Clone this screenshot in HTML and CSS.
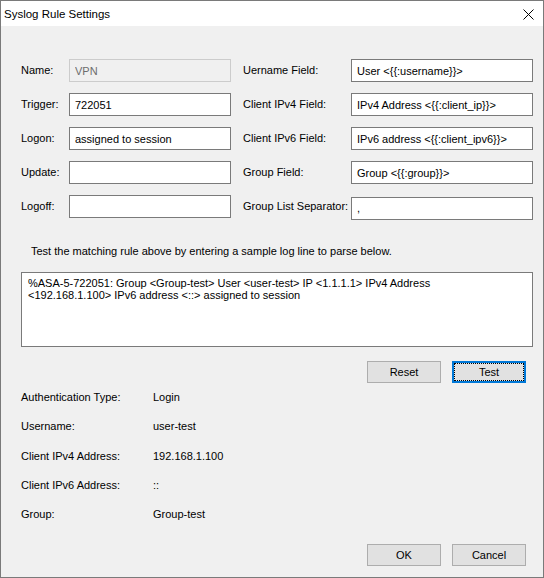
FILE: index.html
```html
<!DOCTYPE html>
<html lang="en">
<head>
  <meta charset="UTF-8">
  <meta name="viewport" content="width=device-width, initial-scale=1.0">
  <title>Syslog Rule Settings</title>
  <link rel="stylesheet" href="styles.css">
</head>
<body>

  <div class="window">
    <!-- Title bar -->
    <div class="titlebar">
      <span class="title">Syslog Rule Settings</span>
      <svg class="close" width="11" height="11" viewBox="0 0 11 11">
        <path d="M0.5 0.5 L10.5 10.5 M10.5 0.5 L0.5 10.5" stroke="#000" stroke-width="1" fill="none"/>
      </svg>
    </div>

    <div class="dialog">
      <!-- Rule fields -->
      <div class="fields">
        <label>Name:</label>
        <input class="field" type="text" value="VPN" disabled>
        <label class="right">Uername Field:</label>
        <input class="field" type="text" value="User <{{:username}}>">

        <label>Trigger:</label>
        <input class="field" type="text" value="722051">
        <label class="right">Client IPv4 Field:</label>
        <input class="field" type="text" value="IPv4 Address <{{:client_ip}}>">

        <label>Logon:</label>
        <input class="field" type="text" value="assigned to session">
        <label class="right">Client IPv6 Field:</label>
        <input class="field" type="text" value="IPv6 address <{{:client_ipv6}}>">

        <label>Update:</label>
        <input class="field" type="text" value="">
        <label class="right">Group Field:</label>
        <input class="field" type="text" value="Group <{{:group}}>">

        <label>Logoff:</label>
        <input class="field" type="text" value="">
        <label class="right">Group List Separator:</label>
        <input class="field sep" type="text" value=",">
      </div>

      <!-- Test area -->
      <p class="hint">Test the matching rule above by entering a sample log line to parse below.</p>
      <div class="sample">%ASA-5-722051: Group &lt;Group-test&gt; User &lt;user-test&gt; IP &lt;1.1.1.1&gt; IPv4 Address<br>&lt;192.168.1.100&gt; IPv6 address &lt;::&gt; assigned to session</div>

      <div class="actions">
        <button class="btn">Reset</button>
        <button class="btn focused">Test</button>
      </div>

      <!-- Parse results -->
      <div class="results">
        <span>Authentication Type:</span><span>Login</span>
        <span>Username:</span><span>user-test</span>
        <span>Client IPv4 Address:</span><span>192.168.1.100</span>
        <span>Client IPv6 Address:</span><span>::</span>
        <span>Group:</span><span>Group-test</span>
      </div>

      <div class="actions footer">
        <button class="btn">OK</button>
        <button class="btn">Cancel</button>
      </div>
    </div>
  </div>

</body>
</html>
```

FILE: styles.css
```css
html, body {
  margin: 0;
  padding: 0;
}

body {
  font-family: "Liberation Sans", Arial, sans-serif;
  font-size: 11px;
  color: #000;
  background-color: #f0f0f0;
}

.window {
  width: 544px;
  height: 578px;
  box-sizing: border-box;
  border: 1px solid #7a7a7a;
  background-color: #f0f0f0;
  display: flex;
  flex-direction: column;
}

.titlebar {
  height: 25px;
  background-color: #fff;
  display: flex;
  align-items: center;
  justify-content: space-between;
  padding: 0 9px 0 3px;
  flex-shrink: 0;
}

.title {
  font-size: 11.5px;
  padding-top: 1px;
}

.close {
  display: block;
  margin-top: 1px;
}

.dialog {
  flex: 1;
  display: flex;
  flex-direction: column;
  padding: 33px 0 11px 20px;
  width: 512px;
}

.fields {
  display: grid;
  grid-template-columns: 48px 162px 120px 182px;
  grid-auto-rows: 23px;
  row-gap: 11px;
  align-items: center;
}

.fields label {
  line-height: 13px;
}

.fields label.right {
  padding-left: 12px;
}

.field {
  box-sizing: border-box;
  height: 23px;
  width: 100%;
  margin: 0;
  border: 1px solid #7a7a7a;
  background-color: #fff;
  padding: 0 0 0 5px;
  font-family: inherit;
  font-size: 11px;
  color: #000;
  outline: none;
}

.field:disabled {
  border-color: #cccccc;
  background-color: #f0f0f0;
  color: #6d6d6d;
}

.field.sep {
  margin-top: 3px;
}

.hint {
  margin: 27px 0 0 10px;
  line-height: 13px;
}

.sample {
  margin-top: 14px;
  box-sizing: border-box;
  height: 75px;
  border: 1px solid #7a7a7a;
  background-color: #fff;
  padding: 4px 0 0 6px;
  line-height: 12px;
}

.actions {
  display: flex;
  justify-content: flex-end;
  gap: 11px;
  padding-right: 7px;
  margin-top: 14px;
}

.btn {
  box-sizing: border-box;
  width: 74px;
  height: 22px;
  margin: 0;
  padding: 0;
  border: 1px solid #adadad;
  background-color: #e1e1e1;
  font-family: inherit;
  font-size: 11px;
  color: #000;
}

.btn.focused {
  border: 2px solid #0078d7;
  outline: 1px dotted #000;
  outline-offset: -3px;
}

.results {
  display: grid;
  grid-template-columns: 132px auto;
  row-gap: 16.25px;
  line-height: 13px;
  margin-top: 8px;
}

.footer {
  margin-top: auto;
}
```
